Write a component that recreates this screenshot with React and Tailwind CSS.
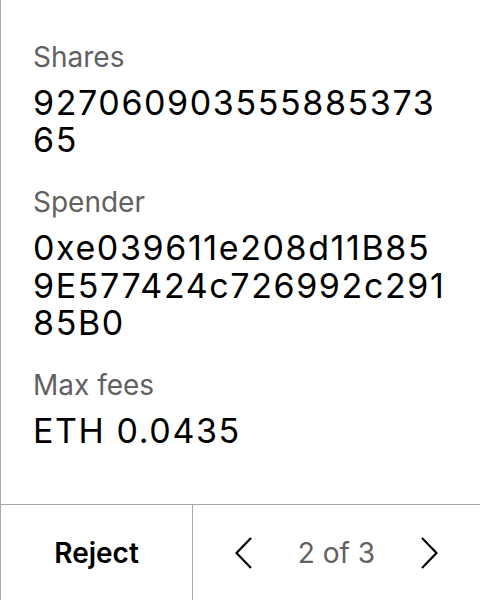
function Field({ label, value }) {
  return (
    <div className="flex flex-col gap-[10px]">
      <div className="text-[28px] leading-[34px] text-[#616161]">{label}</div>
      <div className="text-[34px] leading-[1.1] tracking-[1.6px] text-black break-all">{value}</div>
    </div>
  );
}

export default function App() {
  const font = { fontFamily: "Inter, 'Noto Sans', sans-serif" };
  return (
    <div className="w-[480px] h-[600px] bg-white flex flex-col border-l border-[#a8a8a8]" style={font}>
      <div className="flex-1 pl-8 pr-[28px] pt-[40px] flex flex-col gap-[26.5px]">
        <Field label="Shares" value="92706090355588537365" />
        <Field label="Spender" value="0xe039611e208d11B859E577424c726992c29185B0" />
        <Field label="Max fees" value="ETH 0.0435" />
      </div>
      <div className="h-[96px] shrink-0 border-t border-[#a8a8a8] flex">
        <div className="w-[192px] border-r border-[#a8a8a8] flex items-center justify-center text-[28px] font-semibold text-black">Reject</div>
        <div className="flex-1 flex items-center justify-between pl-[42px] pr-[42px]">
          <svg width="17" height="32" viewBox="0 0 17 32" fill="none" stroke="black" strokeWidth="2.2"><polyline points="16,1 1.5,16 16,31" /></svg>
          <span className="text-[28px] text-[#616161]">2 of 3</span>
          <svg width="17" height="32" viewBox="0 0 17 32" fill="none" stroke="black" strokeWidth="2.2"><polyline points="1,1 15.5,16 1,31" /></svg>
        </div>
      </div>
    </div>
  );
}
